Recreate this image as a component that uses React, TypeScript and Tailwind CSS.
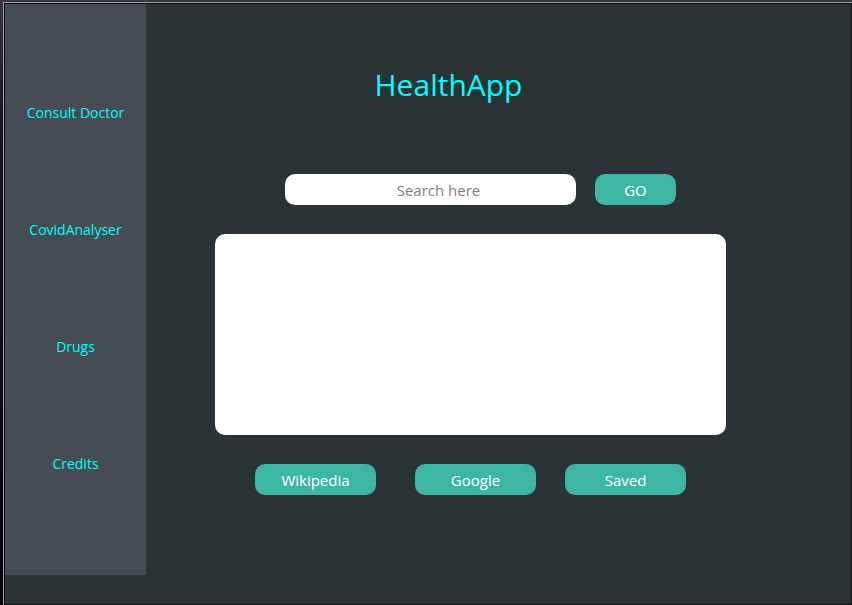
const navItems = ["Consult Doctor", "CovidAnalyser", "Drugs", "Credits"];

const actionClass =
  "h-[31px] rounded-[10px] bg-[#3db7a3] text-center text-[15px] leading-6 text-white";

export default function App() {
  return (
    <div className="flex min-h-screen flex-col bg-linear-to-b from-[#39343f] via-[#14101d] via-25% to-[#08060f] pt-[2px] pl-[3px] font-['Open_Sans','Noto_Sans',sans-serif]">
      <div className="flex flex-1 border-t border-l border-[#a6a3aa]">
        <div className="flex flex-1 items-start border border-[#0c0b10] bg-[#2c3336]">
          <nav className="flex h-[571px] w-[141px] shrink-0 flex-col items-center gap-[93px] bg-[#454c52] pt-[97px]">
            {navItems.map((item) => (
              <a
                key={item}
                href="#"
                className="text-sm leading-6 whitespace-nowrap text-[#00ffff]"
              >
                {item}
              </a>
            ))}
          </nav>
          <main className="flex min-w-0 flex-1 flex-col pt-[61px] pr-[125px] pl-[69px]">
            <h1 className="pr-11 text-center text-[30px] leading-10 text-[#00ffff]">
              HealthApp
            </h1>
            <form
              className="mt-[69px] flex gap-[19px] pr-[50px] pl-[70px]"
              onSubmit={(event) => event.preventDefault()}
            >
              <input
                type="text"
                aria-label="Search"
                placeholder="Search here"
                className="h-[31px] min-w-0 flex-1 rounded-[10px] bg-white pr-2 pl-6 text-center text-[15px] leading-6 text-gray-800 outline-none placeholder:text-[#808080]"
              />
              <button type="submit" className={`${actionClass} w-[81px]`}>
                GO
              </button>
            </form>
            <textarea
              aria-label="Results"
              readOnly
              className="mt-[29px] h-[201px] w-full resize-none rounded-[10px] bg-white p-3 text-[15px] text-gray-800 outline-none"
            />
            <div className="mt-[29px] flex px-10">
              <button type="button" className={`${actionClass} flex-1`}>
                Wikipedia
              </button>
              <button type="button" className={`${actionClass} ml-[39px] flex-1`}>
                Google
              </button>
              <button type="button" className={`${actionClass} ml-[29px] flex-1`}>
                Saved
              </button>
            </div>
          </main>
        </div>
      </div>
    </div>
  );
}
